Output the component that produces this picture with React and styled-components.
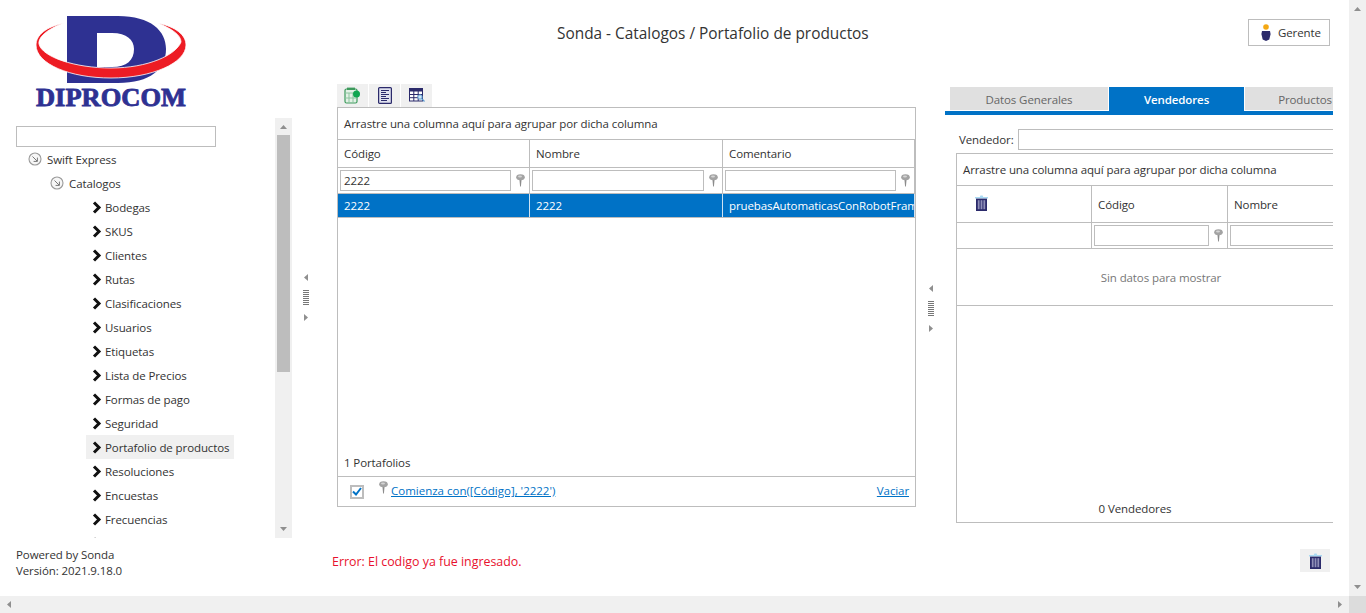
import React from 'react';
import styled, { createGlobalStyle } from 'styled-components';

const GlobalStyle = createGlobalStyle`
	html, body { margin: 0; padding: 0; height: 100%; overflow: hidden; }
	body { font-family: "Open Sans", "Liberation Sans", sans-serif; font-size: 11.5px; letter-spacing: -0.1px; color: #333; background: #fff; }
	* { box-sizing: border-box; }
`;

const BLUE = '#0072c6';
const LINE = '#bdbdbd';

const treeItems = ['Bodegas', 'SKUS', 'Clientes', 'Rutas', 'Clasificaciones', 'Usuarios', 'Etiquetas', 'Lista de Precios', 'Formas de pago', 'Seguridad', 'Portafolio de productos', 'Resoluciones', 'Encuestas', 'Frecuencias', ''];

const PinIcon = () => (
	<svg width="9" height="13" viewBox="0 0 9 13">
		<path d="M3.400 5h2.200l-.7 7.500h-.8z" fill="#8c8c8c" />
		<ellipse cx="4.500" cy="3.200" rx="4.300" ry="3" fill="#a3a3a3" />
		<ellipse cx="4" cy="2.400" rx="2" ry="1" fill="#d4d4d4" />
	</svg>
);

const TrashIcon = () => (
	<svg width="13" height="16" viewBox="0 0 13 16">
		<path d="M0 2h4.800l.6-1.400h2.200l.6 1.400H13v1.600H0z" fill="#a9d9f2" />
		<rect x="1" y="3.600" width="11" height="12.400" fill="#2b2a6b" />
		<rect x="2.800" y="5.200" width="1.800" height="9" fill="#8f8fb8" />
		<rect x="5.600" y="5.200" width="1.800" height="9" fill="#8f8fb8" />
		<rect x="8.400" y="5.200" width="1.800" height="9" fill="#8f8fb8" />
	</svg>
);

const ChevronIcon = () => (
	<svg width="10" height="13" viewBox="0 0 10 13">
		<path d="M2 1.500l5 5-5 5" fill="none" stroke="#111" strokeWidth="3" />
	</svg>
);

const CircleArrowIcon = () => (
	<svg width="14" height="14" viewBox="0 0 14 14">
		<circle cx="7" cy="7" r="6" fill="#f6f6f6" stroke="#9a9a9a" strokeWidth="1.100" />
		<path d="M4.500 4.500l4.600 4.600M9.400 5.600v3.800H5.600" fill="none" stroke="#777" strokeWidth="1" />
	</svg>
);

const ExportIcon = () => (
	<svg width="17" height="17" viewBox="0 0 17 17">
		<rect x="1" y="2" width="12" height="14" rx="1.500" fill="#e3f1e6" stroke="#3d9a5c" strokeWidth="1.200" />
		<path d="M1 6h12M5 6v10M9 6v10M1 11h12" stroke="#8cc49f" strokeWidth="1" />
		<rect x="3" y="0.600" width="8" height="2.400" fill="#3d9a5c" />
		<circle cx="12.500" cy="7" r="3.500" fill="#10a650" />
	</svg>
);

const SheetIcon = () => (
	<svg width="14" height="17" viewBox="0 0 14 17">
		<rect x="0.600" y="0.600" width="12.800" height="15.800" rx="1" fill="#dfe1ee" stroke="#2b2a6b" strokeWidth="1.200" />
		<path d="M3 3.500h8M3 5.500h5M3 7.500h8M3 9.500h5M3 11.500h8M3 13.500h6" stroke="#2b2a6b" strokeWidth="1.100" />
	</svg>
);

const TableIcon = () => (
	<svg width="16" height="15" viewBox="0 0 16 15">
		<rect x="0.500" y="0.500" width="13" height="12.500" fill="#fff" stroke="#2b2a6b" />
		<rect x="0.500" y="0.500" width="13" height="3" fill="#2b2a6b" />
		<path d="M4.800 3v10M9.200 3v10M.5 6.500h13M.5 9.700h13" stroke="#2b2a6b" />
		<circle cx="11" cy="9" r="2.200" fill="#cfe6f6" stroke="#5a9bd0" />
		<path d="M12.500 10.500l3 3" stroke="#5a9bd0" strokeWidth="1.300" />
	</svg>
);

const PersonIcon = () => (
	<svg width="10" height="17" viewBox="0 0 10 17">
		<circle cx="5" cy="3" r="2.800" fill="#f4a813" />
		<path d="M1 7h8l.6 3-1.300 5.500L5 17l-3.300-1.500L.4 10z" fill="#2b2a6b" />
	</svg>
);

const Triangle = ({ dir }) => {
	const shapes = {
		up: 'M0 4L3.500 0 7 4z',
		down: 'M0 0h7L3.500 4z',
		left: 'M4 0v7L0 3.500z',
		right: 'M0 0l4 3.500L0 7z',
	};
	const wide = dir === 'up' || dir === 'down';
	return (
		<svg width={wide ? 7 : 4} height={wide ? 4 : 7} viewBox={wide ? '0 0 7 4' : '0 0 4 7'}>
			<path d={shapes[dir]} fill="#8f8f8f" />
		</svg>
	);
};

const Logo = () => (
	<svg width="152" height="100" viewBox="35 15 152 100">
		<path fillRule="evenodd" fill="#2e3192" d="M67 16H118C151 16 166 31 166 49C166 69 150 83 118 83H67ZM97 33V67H112C127 67 134 60 134 49C134 40 127 33 112 33Z" />
		<path fill="#ed1c24" stroke="#fff" strokeWidth="0.800" d="M64 23C46 27 36 35 36 45C36 64 70 78 111 78C152 78 186 63 186 45C186 35 176 27 158 23C172 29 181 35 181 42C176 55 148 68 111 68C75 68 42 57 39 44C38 36 50 28 64 23Z" />
		<text x="36" y="106" textLength="150" lengthAdjust="spacingAndGlyphs" fontFamily="Liberation Serif" fontWeight="700" fontSize="25" letterSpacing="0" fill="#2e3192" stroke="#2e3192" strokeWidth="0.800">DIPROCOM</text>
	</svg>
);

const Page = styled.div`
	display: grid;
	grid-template-columns: 1349px 17px;
	grid-template-rows: 596px 17px;
	width: 1366px;
	height: 613px;
	overflow: hidden;
`;

const Main = styled.div`
	display: flex;
	min-width: 0;
`;

const VBar = styled.div`
	display: flex;
	flex-direction: column;
	justify-content: space-between;
	align-items: center;
	padding: 7px 0;
	background: #f0f0f0;
`;

const HBar = styled.div`
	display: flex;
	justify-content: space-between;
	align-items: center;
	padding: 0 7px;
	background: #f0f0f0;
`;

const Corner = styled.div`
	background: #dcdcdc;
`;

const LeftColumn = styled.aside`
	display: flex;
	flex-direction: column;
	width: 292px;
	flex: none;
`;

const LogoBox = styled.div`
	height: 118px;
	padding: 15px 0 0 35px;
`;

const TreePanel = styled.div`
	display: flex;
	height: 420px;
`;

const TreeBody = styled.div`
	flex: 1;
	padding: 8px 0 0 16px;
	overflow: hidden;
`;

const SearchBox = styled.input`
	display: block;
	width: 200px;
	height: 21px;
	border: 1px solid ${LINE};
	background: #fff;
`;

const TreeRow = styled.div`
	display: flex;
	align-items: center;
	gap: 5px;
	height: 24px;
	margin-left: ${p => p.$indent}px;
	white-space: nowrap;
`;

const LeafRow = styled.div`
	display: inline-flex;
	align-items: center;
	gap: 3px;
	height: 24px;
	padding: 0 5px 0 6px;
	margin-left: 70px;
	white-space: nowrap;
	vertical-align: top;
	background: ${p => (p.$active ? '#f0f0f0' : 'transparent')};
`;

const ScrollTrack = styled.div`
	display: flex;
	flex-direction: column;
	align-items: center;
	width: 17px;
	background: #f0f0f0;
	padding-top: 7px;
	padding-bottom: 7px;
`;

const ScrollThumb = styled.div`
	width: 13px;
	height: 237px;
	background: #bdbdbd;
	margin-top: 6px;
	margin-bottom: auto;
`;

const VersionBox = styled.div`
	padding: 9px 0 0 16px;
	line-height: 16px;
`;

const RightColumn = styled.div`
	flex: 1;
	display: flex;
	flex-direction: column;
	min-width: 0;
`;

const Header = styled.header`
	display: flex;
	align-items: flex-start;
	justify-content: space-between;
	height: 84px;
	padding: 19px 19px 0 265px;
`;

const Title = styled.h1`
	margin: 1px 0 0;
	font-size: 15.4px;
	font-weight: 400;
	letter-spacing: 0;
	line-height: 28px;
`;

const UserButton = styled.button`
	display: flex;
	align-items: center;
	gap: 7px;
	width: 82px;
	height: 27px;
	padding: 0 0 0 12px;
	background: #fff;
	border: 1px solid ${LINE};
	color: #333;
	font: inherit;
	letter-spacing: inherit;
`;

const Body = styled.div`
	display: flex;
	height: 456px;
`;

const Splitter = styled.div`
	display: flex;
	flex-direction: column;
	align-items: center;
	flex: none;
	gap: 9px;
	width: ${p => p.$width}px;
	padding-top: ${p => p.$top}px;
	padding-right: ${p => p.$right}px;
`;

const Grip = styled.div`
	width: 6px;
	height: 15px;
	background: repeating-linear-gradient(to bottom, #777 0 1px, #fff 1px 2px);
`;

const CenterPanel = styled.section`
	display: flex;
	flex-direction: column;
	width: 579px;
	flex: none;
`;

const Toolbar = styled.div`
	display: flex;
	gap: 1px;
	height: 23px;
`;

const ToolButton = styled.button`
	display: flex;
	align-items: center;
	justify-content: center;
	width: 31px;
	padding: 0;
	border: 0;
	background: #f0f0f0;
`;

const GridBox = styled.div`
	display: flex;
	flex-direction: column;
	width: ${p => (p.$width ? `${p.$width}px` : 'auto')};
	height: ${p => p.$height}px;
	border: 1px solid ${LINE};
	border-right: ${p => (p.$open ? 0 : `1px solid ${LINE}`)};
	overflow: hidden;
`;

const GroupPanel = styled.div`
	display: flex;
	align-items: center;
	flex: none;
	height: ${p => p.$height}px;
	padding-left: 6px;
	white-space: nowrap;
	border-bottom: 1px solid ${LINE};
`;

const GridRow = styled.div`
	display: grid;
	flex: none;
	grid-template-columns: ${p => p.$cols};
	height: ${p => p.$height}px;
	width: ${p => p.$width}px;
	border-bottom: 1px solid ${LINE};
	background: ${p => (p.$selected ? BLUE : 'transparent')};
	color: ${p => (p.$selected ? '#fff' : 'inherit')};
`;

const Cell = styled.div`
	display: flex;
	align-items: center;
	gap: 5px;
	min-width: 0;
	padding: ${p => (p.$filter ? '0 4px 0 2px' : '0 0 0 6px')};
	border-right: 1px solid ${p => (p.$selected ? '#cfe3f3' : LINE)};
	white-space: nowrap;
	overflow: hidden;
`;

const IconCell = styled(Cell)`
	padding: 0 0 3px 18px;
`;

const FilterInput = styled.input`
	flex: 1;
	min-width: 0;
	height: 21px;
	padding: 0 3px;
	border: 1px solid ${LINE};
	font: inherit;
	letter-spacing: inherit;
	color: #333;
	background: #fff;
`;

const GridSpacer = styled.div`
	flex: 1;
`;

const CountBar = styled.div`
	flex: none;
	height: 26px;
	padding: 3px 0 0 6px;
	border-bottom: 1px solid ${LINE};
	line-height: 18px;
`;

const FilterBar = styled.div`
	display: flex;
	align-items: center;
	flex: none;
	height: 29px;
	padding: 0 6px 2px 12px;
`;

const CheckBox = styled.span`
	display: flex;
	align-items: center;
	justify-content: center;
	width: 14px;
	height: 14px;
	margin: 2px 15px 0 0;
	background: #fff;
	border: 2px solid #bdbdbd;
`;

const PinSlot = styled.span`
	display: flex;
	flex: none;
	margin-right: 3px;
	margin-top: -6px;
`;

const FilterLink = styled.a`
	color: ${BLUE};
	text-decoration: underline;
	letter-spacing: ${p => (p.$right ? '-0.1px' : '0')};
	margin-right: ${p => (p.$right ? '0' : 'auto')};
`;

const DetailPanel = styled.section`
	width: 388px;
	flex: none;
	margin-top: 3px;
	overflow: hidden;
`;

const TabStrip = styled.div`
	display: flex;
	gap: 1px;
	height: 28px;
	padding-left: 5px;
	border-bottom: 4px solid ${BLUE};
`;

const Tab = styled.div`
	display: flex;
	align-items: center;
	justify-content: center;
	flex: none;
	width: ${p => p.$width}px;
	padding-top: 1px;
	background: ${p => (p.$active ? BLUE : '#e0e0e0')};
	color: ${p => (p.$active ? '#fff' : '#666')};
	font-weight: ${p => (p.$active ? 600 : 400)};
	border-bottom: 1px solid ${p => (p.$active ? BLUE : '#fff')};
`;

const SellerRow = styled.div`
	display: flex;
	align-items: center;
	gap: 4px;
	height: 21px;
	margin: 14px 0 3px;
	padding-left: 14px;
`;

const SellerInput = styled.input`
	width: 340px;
	flex: none;
	height: 21px;
	border: 1px solid ${LINE};
	background: #fff;
`;

const GridWrap = styled.div`
	margin-left: 11px;
`;

const EmptyRow = styled.div`
	display: flex;
	align-items: center;
	justify-content: center;
	flex: none;
	height: 57px;
	width: 408px;
	color: #777;
	border-bottom: 1px solid ${LINE};
`;

const CenteredFooter = styled.div`
	flex: none;
	padding-bottom: 6px;
	width: 356px;
	text-align: center;
`;

const Footer = styled.footer`
	display: flex;
	justify-content: space-between;
	align-items: flex-start;
	flex: 1;
	padding: 9px 19px 0 40px;
`;

const ErrorText = styled.div`
	padding-top: 4px;
	font-size: 12.4px;
	letter-spacing: 0;
	color: #e8112d;
`;

const DeleteButton = styled.button`
	display: flex;
	align-items: center;
	justify-content: center;
	width: 30px;
	height: 23px;
	padding: 0;
	border: 0;
	background: #f0f0f0;
`;

const App = () => {
	const mainCols = '192px 193px 192px';
	const detailCols = '135px 136px 137px';
	return (
		<Page>
			<GlobalStyle />
			<Main>
				<LeftColumn>
					<LogoBox><Logo /></LogoBox>
					<TreePanel>
						<TreeBody>
							<SearchBox />
							<TreeRow $indent={12}><CircleArrowIcon /><span>Swift Express</span></TreeRow>
							<TreeRow $indent={34}><CircleArrowIcon /><span>Catalogos</span></TreeRow>
							{treeItems.map((item, i) => (
								<div key={i}>
									<LeafRow $active={item === 'Portafolio de productos'}>
										<ChevronIcon /><span>{item}</span>
									</LeafRow>
								</div>
							))}
						</TreeBody>
						<ScrollTrack>
							<Triangle dir="up" />
							<ScrollThumb />
							<Triangle dir="down" />
						</ScrollTrack>
					</TreePanel>
					<VersionBox>
						<div>Powered by Sonda</div>
						<div>Versión: 2021.9.18.0</div>
					</VersionBox>
				</LeftColumn>
				<RightColumn>
					<Header>
						<Title>Sonda - Catalogos / Portafolio de productos</Title>
						<UserButton><PersonIcon />Gerente</UserButton>
					</Header>
					<Body>
						<Splitter $width={45} $top={190} $right={17}>
							<Triangle dir="left" />
							<Grip />
							<Triangle dir="right" />
						</Splitter>
						<CenterPanel>
							<Toolbar>
								<ToolButton><ExportIcon /></ToolButton>
								<ToolButton><SheetIcon /></ToolButton>
								<ToolButton><TableIcon /></ToolButton>
							</Toolbar>
							<GridBox $height={400}>
								<GroupPanel $height={32}>Arrastre una columna aquí para agrupar por dicha columna</GroupPanel>
								<GridRow $cols={mainCols} $height={28} $width={577}>
									<Cell>Código</Cell>
									<Cell>Nombre</Cell>
									<Cell>Comentario</Cell>
								</GridRow>
								<GridRow $cols={mainCols} $height={26} $width={577}>
									<Cell $filter><FilterInput defaultValue="2222" /><PinIcon /></Cell>
									<Cell $filter><FilterInput /><PinIcon /></Cell>
									<Cell $filter><FilterInput /><PinIcon /></Cell>
								</GridRow>
								<GridRow $cols={mainCols} $height={24} $width={577} $selected>
									<Cell $selected>2222</Cell>
									<Cell $selected>2222</Cell>
									<Cell $selected>pruebasAutomaticasConRobotFramework</Cell>
								</GridRow>
								<GridSpacer />
								<CountBar>1 Portafolios</CountBar>
								<FilterBar>
									<CheckBox>
										<svg width="10" height="9" viewBox="0 0 10 9"><path d="M1 4.500l3 3L9 1" fill="none" stroke={BLUE} strokeWidth="2" /></svg>
									</CheckBox>
									<PinSlot><PinIcon /></PinSlot>
									<FilterLink href="#">Comienza con([Código], '2222')</FilterLink>
									<FilterLink href="#" $right>Vaciar</FilterLink>
								</FilterBar>
							</GridBox>
						</CenterPanel>
						<Splitter $width={29} $top={201} $right={0}>
							<Triangle dir="left" />
							<Grip />
							<Triangle dir="right" />
						</Splitter>
						<DetailPanel>
							<TabStrip>
								<Tab $width={158}>Datos Generales</Tab>
								<Tab $width={135} $active>Vendedores</Tab>
								<Tab $width={120}>Productos</Tab>
							</TabStrip>
							<SellerRow>
								<span>Vendedor:</span>
								<SellerInput />
							</SellerRow>
							<GridWrap>
								<GridBox $height={370} $width={410} $open>
									<GroupPanel $height={32}>Arrastre una columna aquí para agrupar por dicha columna</GroupPanel>
									<GridRow $cols={detailCols} $height={37} $width={408}>
										<IconCell><TrashIcon /></IconCell>
										<Cell>Código</Cell>
										<Cell>Nombre</Cell>
									</GridRow>
									<GridRow $cols={detailCols} $height={26} $width={408}>
										<Cell />
										<Cell $filter><FilterInput /><PinIcon /></Cell>
										<Cell $filter><FilterInput /></Cell>
									</GridRow>
									<EmptyRow>Sin datos para mostrar</EmptyRow>
									<GridSpacer />
									<CenteredFooter>0 Vendedores</CenteredFooter>
								</GridBox>
							</GridWrap>
						</DetailPanel>
					</Body>
					<Footer>
						<ErrorText>Error: El codigo ya fue ingresado.</ErrorText>
						<DeleteButton><TrashIcon /></DeleteButton>
					</Footer>
				</RightColumn>
			</Main>
			<VBar>
				<Triangle dir="up" />
				<Triangle dir="down" />
			</VBar>
			<HBar>
				<Triangle dir="left" />
				<Triangle dir="right" />
			</HBar>
			<Corner />
		</Page>
	);
};

export default App;
